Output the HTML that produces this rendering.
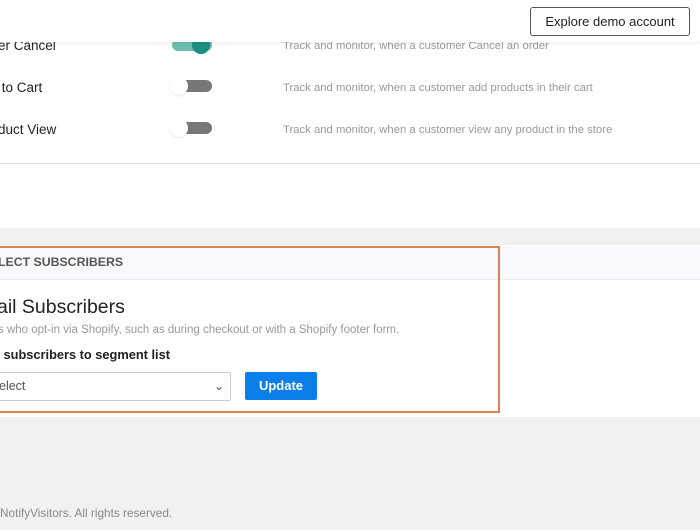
<html><head><style>
body{margin:0;width:700px;height:530px;background:#f1f1f1;font-family:"Liberation Sans",sans-serif;position:relative;overflow:hidden}
.a{position:absolute}
.lbl{font-size:13.5px;color:#222;left:-2px}
.desc{font-size:11.3px;color:#999;left:283px}
.tg{left:172px;width:40px;height:12px;border-radius:6px;background:#777}
.tg i{position:absolute;left:-2px;top:-3px;width:18px;height:18px;border-radius:50%;background:#fff;box-shadow:0 1px 2px rgba(0,0,0,.1)}
</style></head><body>
<div class="a" style="left:0;top:0;width:700px;height:228px;background:#fff"></div>
<div class="a" style="left:0;top:163px;width:700px;height:1px;background:#e3e3e3"></div>
<div class="a lbl" style="top:38px">er Cancel</div>
<div class="a lbl" style="top:80px">&nbsp;to Cart</div>
<div class="a lbl" style="top:122px">duct View</div>
<div class="a tg" style="top:39px;background:#6dbdb0"><i style="left:20px;background:#1a8f7e;box-shadow:none"></i></div>
<div class="a tg" style="top:80px"><i></i></div>
<div class="a tg" style="top:122px"><i></i></div>
<div class="a desc" style="top:40px">Track and monitor, when a customer Cancel an order</div>
<div class="a desc" style="top:82px">Track and monitor, when a customer add products in their cart</div>
<div class="a desc" style="top:124px">Track and monitor, when a customer view any product in the store</div>
<div class="a" style="left:0;top:0;width:700px;height:42px;background:#fff;box-shadow:0 2px 3px rgba(0,0,0,.06)"></div>
<div class="a" style="left:530px;top:7px;width:158px;height:27px;border:1px solid #555;border-radius:3px;font-size:13px;color:#222;text-align:center;line-height:27px">Explore demo account</div>
<div class="a" style="left:0;top:245px;width:700px;height:172px;background:#fff"></div>
<div class="a" style="left:0;top:246px;width:700px;height:33px;background:#f7f9fc;border-bottom:1px solid #e8ecf0"></div>
<div class="a" style="left:-3px;top:246px;width:499px;height:163px;border:2px solid #e07f4f"></div>
<div class="a" style="left:-2px;top:255px;font-size:12.3px;font-weight:bold;color:#555">LECT SUBSCRIBERS</div>
<div class="a" style="left:-3px;top:296px;font-size:19.5px;color:#222">ail Subscribers</div>
<div class="a" style="left:-2px;top:324px;font-size:11.5px;color:#999">s who opt-in via Shopify, such as during checkout or with a Shopify footer form.</div>
<div class="a" style="left:0;top:347px;font-size:12.8px;font-weight:bold;color:#222">&nbsp;subscribers to segment list</div>
<div class="a" style="left:-2px;top:372px;width:231px;height:27px;border:1px solid #ccc;border-radius:2px;font-size:12.5px;color:#555;line-height:27px">elect<span style="position:absolute;right:6px;top:0;font-size:12px">&#8964;</span></div>
<div class="a" style="left:245px;top:372px;width:72px;height:28px;background:#0b7ee8;border-radius:2px;color:#fff;font-size:13px;font-weight:bold;text-align:center;line-height:28px">Update</div>
<div class="a" style="left:0;top:506px;font-size:11.8px;color:#888">NotifyVisitors. All rights reserved.</div>
</body></html>
